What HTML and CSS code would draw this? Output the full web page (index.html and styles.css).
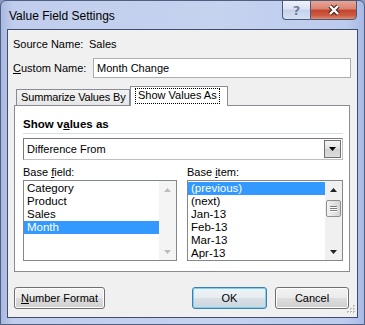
FILE: index.html
```html
<!DOCTYPE html>
<html>
<head>
<meta charset="utf-8">
<link rel="stylesheet" href="styles.css">
</head>
<body>
<div class="frame">
  <div class="titlebar">
    <span class="title">Value Field Settings</span>
    <div class="caption-btns">
      <div class="cb help">?</div>
      <div class="cb close">
        <svg width="16" height="12" viewBox="0 0 16 12"><path d="M4 2 L12 10 M12 2 L4 10" stroke="#3a1c18" stroke-width="4.4" fill="none"/><path d="M4 2 L12 10 M12 2 L4 10" stroke="#fff" stroke-width="2.4" fill="none"/></svg>
      </div>
    </div>
  </div>
  <div class="client">
    <div class="row src"><span class="lbl lbl-src">Source Name:</span><span>Sales</span></div>
    <div class="row name"><span class="lbl lbl-name"><u>C</u>ustom Name:</span><div class="input">Month Change</div></div>
    <div class="tabs">
      <div class="tab">Summarize Values By</div>
      <div class="tab active"><span class="focus">Show Values As</span></div>
    </div>
    <div class="panel">
      <div class="section-title">Show v<u>a</u>lues as</div>
      <div class="rule"></div>
      <div class="combo"><span>Difference From</span><div class="combo-btn"><svg width="7" height="4" viewBox="0 0 7 4"><path d="M0 0 H7 L3.5 4 Z" fill="#000"/></svg></div></div>
      <div class="lists">
        <div class="col col-field">
          <div class="lbl-list">Base <u>f</u>ield:</div>
          <div class="listbox">
            <div class="items">
              <div class="item">Category</div>
              <div class="item">Product</div>
              <div class="item">Sales</div>
              <div class="item sel">Month</div>
            </div>
            <div class="sbar disabled">
              <div class="arrow"><svg width="7" height="4" viewBox="0 0 7 4"><path d="M0 4 H7 L3.5 0 Z" fill="#bcbcbc"/></svg></div>
              <div class="track"></div>
              <div class="arrow"><svg width="7" height="4" viewBox="0 0 7 4"><path d="M0 0 H7 L3.5 4 Z" fill="#bcbcbc"/></svg></div>
            </div>
          </div>
        </div>
        <div class="col col-item">
          <div class="lbl-list">Base <u>i</u>tem:</div>
          <div class="listbox">
            <div class="items">
              <div class="item sel">(previous)</div>
              <div class="item">(next)</div>
              <div class="item">Jan-13</div>
              <div class="item">Feb-13</div>
              <div class="item">Mar-13</div>
              <div class="item">Apr-13</div>
            </div>
            <div class="sbar">
              <div class="arrow"><svg width="7" height="4" viewBox="0 0 7 4"><path d="M0 4 H7 L3.5 0 Z" fill="#222"/></svg></div>
              <div class="track">
                <div class="thumb"><span></span><span></span><span></span></div>
              </div>
              <div class="arrow"><svg width="7" height="4" viewBox="0 0 7 4"><path d="M0 0 H7 L3.5 4 Z" fill="#222"/></svg></div>
            </div>
          </div>
        </div>
      </div>
    </div>
    <div class="buttons">
      <div class="btn btn-num"><u>N</u>umber Format</div>
      <div class="spacer"></div>
      <div class="btn btn-ok default">OK</div>
      <div class="btn btn-cancel">Cancel</div>
    </div>
    <svg class="grip" width="11" height="11" viewBox="0 0 11 11">
      <g fill="#b8b8b8">
        <rect x="8" y="0" width="2" height="2"/>
        <rect x="5" y="3" width="2" height="2"/><rect x="8" y="3" width="2" height="2"/>
        <rect x="2" y="6" width="2" height="2"/><rect x="5" y="6" width="2" height="2"/><rect x="8" y="6" width="2" height="2"/>
      </g>
      <g fill="#fff">
        <rect x="9" y="1" width="1" height="1"/>
        <rect x="6" y="4" width="1" height="1"/><rect x="9" y="4" width="1" height="1"/>
        <rect x="3" y="7" width="1" height="1"/><rect x="6" y="7" width="1" height="1"/><rect x="9" y="7" width="1" height="1"/>
      </g>
    </svg>
  </div>
</div>
</body>
</html>
```

FILE: styles.css
```css
* { box-sizing: border-box; }
html, body { margin: 0; padding: 0; }
body {
  width: 365px;
  height: 325px;
  overflow: hidden;
  font-family: "Liberation Sans", Arial, sans-serif;
  font-size: 11px;
  color: #000;
  background: #8a9ac0;
}
.frame {
  width: 365px;
  height: 325px;
  border: 1px solid #4f5f80;
  border-radius: 6px 6px 0 0;
  background: linear-gradient(to right, #a9b8e0 0px, #c0cdec 12px, #c6d3ef 60%, #bccbee 95%, #a9b9e6 100%);
  padding: 0 6px 6px 6px;
  display: flex;
  flex-direction: column;
}
.titlebar {
  height: 28px;
  display: flex;
  align-items: flex-start;
  justify-content: space-between;
}
.title {
  font-size: 12px;
  margin-top: 8px;
  margin-left: 2px;
  color: #000;
}
.caption-btns {
  display: flex;
  margin-top: -1px;
  margin-right: 1px;
}
.cb {
  height: 20px;
  border: 1px solid #4b5a78;
  display: flex;
  align-items: center;
  justify-content: center;
}
.help {
  width: 28px;
  border-radius: 0 0 0 4px;
  border-right: none;
  background: linear-gradient(to bottom, #eef2fa 0%, #d9e2f2 45%, #c4d1ea 50%, #d5e0f3 100%);
  font-family: "DejaVu Sans", sans-serif;
  font-weight: bold;
  font-size: 13px;
  color: #6e7c99;
  text-shadow: 0 0 1px #fff;
}
.close {
  width: 47px;
  border-radius: 0 0 4px 0;
  background: linear-gradient(to bottom, #e8a594 0%, #d98472 45%, #c4432f 50%, #cd5a43 80%, #e08c70 100%);
}
.client {
  position: relative;
  flex: 1;
  background: #f0f0f0;
  border: 1px solid #3d4d6b;
}
.row {
  display: flex;
  align-items: center;
  padding-left: 5px;
}
.src { margin-top: 7px; height: 14px; }
.lbl-src { width: 76px; }
.name { margin-top: 7px; height: 20px; }
.lbl-name { width: 80px; }
.input {
  width: 258px;
  height: 20px;
  border: 1px solid #abadb3;
  background: #fff;
  padding-left: 3px;
  line-height: 18px;
}
.tabs {
  display: flex;
  margin-top: 8px;
  padding-left: 8px;
  height: 19px;
  align-items: flex-end;
  position: relative;
  z-index: 1;
}
.tab {
  height: 16px;
  width: 114px;
  border: 1px solid #898c95;
  border-bottom: none;
  background: linear-gradient(to bottom, #f3f3f3, #e6e6e6);
  padding-left: 4px;
  line-height: 15px;
  white-space: nowrap;
  letter-spacing: -0.15px;
}
.tab.active {
  width: 98px;
  height: 20px;
  margin-bottom: -1px;
  background: #fff;
  padding: 2px 0 0 5px;
  line-height: 13px;
  letter-spacing: 0;
}
.focus {
  display: inline-block;
  outline: 1px dotted #000;
  padding: 0 2px;
  height: 14px;
}
.panel {
  margin-left: 6px;
  width: 336px;
  height: 167px;
  border: 1px solid #898c95;
  background: #fff;
  padding-left: 8px;
}
.section-title {
  margin-top: 11px;
  font-weight: bold;
  font-size: 11.5px;
  height: 15px;
  line-height: 15px;
}
.rule {
  width: 320px;
  height: 1px;
  margin-top: 1px;
  background: #d5dfe5;
}
.combo {
  margin-top: 4px;
  width: 320px;
  height: 22px;
  border: 1px solid #7a7a7a;
  border-right-color: #c0c0c0;
  border-bottom-color: #c0c0c0;
  display: flex;
  align-items: center;
  justify-content: space-between;
  padding-left: 3px;
  padding-right: 1px;
}
.combo-btn {
  width: 17px;
  height: 18px;
  border: 1px solid #707070;
  background: linear-gradient(to bottom, #f4f4f4, #e0e0e0 50%, #d2d2d2 51%, #dcdcdc);
  display: flex;
  align-items: center;
  justify-content: center;
}
.lists {
  display: flex;
  margin-top: 5px;
  gap: 10px;
}
.col-field { width: 154px; }
.col-item { width: 156px; }
.lbl-list {
  height: 14px;
  line-height: 14px;
}
.listbox {
  margin-top: 1px;
  height: 81px;
  border: 1px solid #828790;
  display: flex;
  background: #fff;
}
.items {
  flex: 1;
  padding-top: 1px;
}
.item {
  height: 13px;
  line-height: 13px;
  padding-left: 3px;
  font-size: 11.5px;
}
.item.sel {
  background: #3399ff;
  color: #fff;
}
.sbar {
  width: 17px;
  display: flex;
  flex-direction: column;
  background: #f0f0f0;
}
.sbar.disabled { background: #f4f4f4; }
.arrow {
  height: 17px;
  display: flex;
  align-items: center;
  justify-content: center;
}
.track {
  flex: 1;
  position: relative;
}
.thumb {
  margin: 2px 1px 0 1px;
  height: 17px;
  border: 1px solid #8f8f8f;
  border-radius: 2px;
  background: linear-gradient(to right, #f3f3f3, #e3e3e3 50%, #d6d6d6);
  display: flex;
  flex-direction: column;
  align-items: center;
  justify-content: center;
  gap: 1px;
}
.thumb span {
  display: block;
  width: 7px;
  height: 1px;
  background: #7b7b7b;
  box-shadow: 0 1px 0 #fff;
}
.buttons {
  display: flex;
  margin-top: 15px;
  padding-left: 6px;
  padding-right: 8px;
  height: 22px;
}
.spacer { flex: 1; }
.btn {
  height: 22px;
  border: 1px solid #707070;
  border-radius: 3px;
  background: linear-gradient(to bottom, #f2f2f2 0%, #ebebeb 50%, #dddddd 51%, #cfcfcf 100%);
  box-shadow: inset 0 0 0 1px #fcfcfc;
  display: flex;
  align-items: center;
  justify-content: center;
}
.btn-num { width: 91px; }
.btn-ok { width: 75px; margin-right: 8px; }
.btn-cancel { width: 74px; }
.btn.default {
  border-color: #3c7fb1;
  box-shadow: inset 0 0 0 1px #7fd0f0;
  background: linear-gradient(to bottom, #eef3f6 0%, #e6ecf0 50%, #d8e0e6 51%, #cdd6dd 100%);
}
.grip {
  position: absolute;
  right: 1px;
  bottom: 1px;
}
```
